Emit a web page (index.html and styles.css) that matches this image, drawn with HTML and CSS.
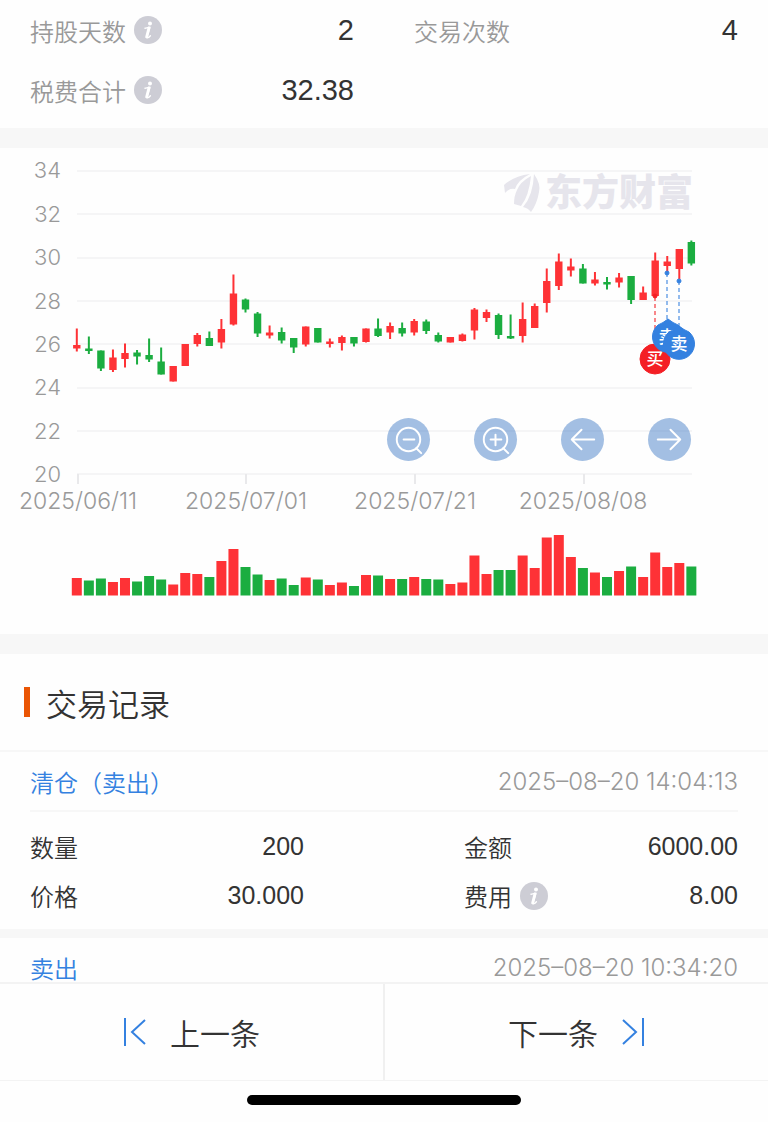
FILE: index.html
```html
<!DOCTYPE html>
<html lang="zh-CN">
	<head>
		<meta charset="UTF-8">
		<meta name="viewport" content="width=device-width, initial-scale=1.0">
		<title>交易记录</title>
		<link rel="stylesheet" href="styles.css">
	</head>
	<body>
		<svg class="defs" width="0" height="0" aria-hidden="true">
			<symbol id="info" viewBox="0 0 28 28">
				<circle cx="14" cy="14" r="14" fill="#cdcdd5"/>
				<circle cx="16" cy="7.4" r="2" fill="#fff"/>
				<path d="M11 12.2C12.6 11.9 14 11.5 16 11.2L13.2 21C13 22.2 14.4 22 16.4 19.8" fill="none" stroke="#fff" stroke-width="1.4" stroke-linecap="round" stroke-linejoin="round"/>
				<path d="M14.9 12L12.6 21" stroke="#fff" stroke-width="2.8" stroke-linecap="round"/>
			</symbol>
		</svg>
		<main>
			<section class="stats">
				<div class="item">
					<span class="label">持股天数</span>
					<button class="info" type="button" aria-label="持股天数说明"><svg><use href="#info"/></svg></button>
					<span class="value">2</span>
				</div>
				<div class="item">
					<span class="label">交易次数</span>
					<span class="value">4</span>
				</div>
				<div class="item">
					<span class="label">税费合计</span>
					<button class="info" type="button" aria-label="税费合计说明"><svg><use href="#info"/></svg></button>
					<span class="value">32.38</span>
				</div>
			</section>

			<section class="chart">
				<svg class="kline" viewBox="0 148 768 486">
					<g class="grid">
						<path d="M77 171H692M77 214H692M77 258H692M77 301H692M77 344H692M77 388H692M77 431H692M77 474H692"/>
						<path class="tick" d="M78 474V484M246 474V484M415 474V484M584 474V484"/>
					</g>
					<g class="logo">
						<path d="M504 185Q514 176 530 174Q518 180 515 189Q509 188 505 193Z"/>
						<path d="M531 176Q520 182 517 190Q514 196 514 204L521 206Q529 196 531 176Z"/>
						<path d="M534 174Q541 184 539 192Q537 204 531 212Q528 208 523 207Q533 196 534 174Z"/>
						<text x="619" y="206">东方财富</text>
					</g>
					<g class="y-axis">
						<text x="61" y="178">34</text>
						<text x="61" y="222">32</text>
						<text x="61" y="265">30</text>
						<text x="61" y="309">28</text>
						<text x="61" y="352">26</text>
						<text x="61" y="395">24</text>
						<text x="61" y="439">22</text>
						<text x="61" y="482">20</text>
					</g>
					<g class="x-axis">
						<text x="78" y="509">2025/06/11</text>
						<text x="246" y="509">2025/07/01</text>
						<text x="415" y="509">2025/07/21</text>
						<text x="583" y="509">2025/08/08</text>
					</g>
					<g id="bars"></g>
					<g class="marks">
						<path class="line buy" d="M655 297V344"/>
						<path class="line sell" d="M667 273V320M679 281V328"/>
						<circle class="buy" cx="655" cy="296" r="2"/>
						<circle class="sell" cx="667" cy="273" r="2"/>
						<circle class="sell" cx="679" cy="281" r="2"/>
						<circle class="buy" cx="655" cy="359" r="15"/>
						<text x="655" y="365">买</text>
						<path class="sell" d="M668 319Q673 323 678 325A15.5 15.5 0 1 1 658 325Q663 323 668 319Z"/>
						<text x="667" y="343">卖</text>
						<path class="sell" d="M679 326Q684 330 689 332A15.5 15.5 0 1 1 669 332Q674 330 679 326Z"/>
						<text x="679" y="350">卖</text>
					</g>
				</svg>
				<div class="tools">
					<button type="button" aria-label="缩小">
						<svg viewBox="0 0 44 44"><circle cx="22" cy="22" r="12"/><path d="M17 22H28M30 31L35 36"/></svg>
					</button>
					<button type="button" aria-label="放大">
						<svg viewBox="0 0 44 44"><circle cx="22" cy="22" r="12"/><path d="M17 22H28M22 17V28M30 31L35 36"/></svg>
					</button>
					<button type="button" aria-label="左移">
						<svg viewBox="0 0 44 44"><path d="M34 22H11M21 12L11 22L21 32"/></svg>
					</button>
					<button type="button" aria-label="右移">
						<svg viewBox="0 0 44 44"><path d="M10 22H33M23 12L33 22L23 32"/></svg>
					</button>
				</div>
			</section>

			<section class="records">
				<h2>交易记录</h2>
				<article>
					<header>
						<a href="#">清仓（卖出）</a>
						<time>2025–08–20 14:04:13</time>
					</header>
					<div class="detail">
						<div class="item">
							<span>数量</span>
							<span class="value">200</span>
						</div>
						<div class="item">
							<span>金额</span>
							<span class="value">6000.00</span>
						</div>
						<div class="item">
							<span>价格</span>
							<span class="value">30.000</span>
						</div>
						<div class="item">
							<span>费用</span>
							<button class="info" type="button" aria-label="费用说明"><svg><use href="#info"/></svg></button>
							<span class="value">8.00</span>
						</div>
					</div>
				</article>
				<article>
					<header>
						<a href="#">卖出</a>
						<time>2025–08–20 10:34:20</time>
					</header>
				</article>
			</section>
		</main>

		<footer>
			<nav>
				<button type="button">
					<svg viewBox="0 0 24 28"><path d="M2 0V28M22 2L9 14L22 26"/></svg>
					上一条
				</button>
				<button type="button">
					下一条
					<svg viewBox="0 0 24 28"><path d="M22 0V28M2 2L15 14L2 26"/></svg>
				</button>
			</nav>
			<div class="home"></div>
		</footer>
		<script src="chart.js"></script>
	</body>
</html>
```
FILE: styles.css
```css
*{
	box-sizing: border-box;
}
body{
	margin: 0;
	height: 100vh;
	display: flex;
	flex-direction: column;
	background-color: #fefefe;
	color: #333;
	font-family: Inter, "Noto Sans CJK SC", sans-serif;
	font-size: 24px;
	font-weight: 350;
}
.defs{
	position: absolute;
}
button{
	appearance: none;
	border: none;
	padding: 0;
	background: none;
	color: inherit;
	font: inherit;
	cursor: pointer;
}
main{
	flex: 1;
	min-height: 0;
	overflow-y: auto;
	scrollbar-width: none;
}
.item{
	display: flex;
	align-items: center;
	gap: 8px;
}
.value{
	margin-left: auto;
	font-family: "Liberation Sans", sans-serif;
}
.info, .info svg{
	display: block;
	width: 28px;
	height: 28px;
}
.stats{
	display: grid;
	grid-template-columns: 1fr 1fr;
	grid-auto-rows: 60px;
	column-gap: 60px;
	padding: 0 30px 8px;
}
.stats .label{
	color: #999;
}
.stats .value{
	font-size: 29px;
}
.chart{
	position: relative;
	border-top: 20px solid #f7f7f7;
	border-bottom: 20px solid #f7f7f7;
}
.kline{
	display: block;
	width: 100%;
}
.grid path{
	stroke: #f5f5f6;
	stroke-width: 2;
}
.grid .tick{
	stroke: #e9e9eb;
}
.logo{
	fill: #e6e5ec;
}
.logo text{
	font-size: 37px;
	font-weight: 900;
	text-anchor: middle;
}
.y-axis, .x-axis{
	fill: #999;
	font-size: 22px;
}
.y-axis{
	text-anchor: end;
}
.x-axis{
	font-size: 23px;
	text-anchor: middle;
}
.up{
	fill: #fe3236;
}
.down{
	fill: #1bad40;
}
.buy{
	fill: #f41f25;
	stroke: #f41f25;
}
.sell{
	fill: #3481e0;
	stroke: #3481e0;
}
.line{
	stroke-width: 1.5;
	stroke-dasharray: 4 3;
	opacity: 0.7;
}
.marks text{
	fill: #fff;
	font-size: 17px;
	font-weight: 500;
	text-anchor: middle;
}
.tools{
	position: absolute;
	right: 10%;
	bottom: 35.5%;
	display: flex;
	gap: 44px;
}
.tools button{
	width: 43px;
	height: 43px;
	border-radius: 50%;
	background-color: rgba(72, 128, 200, 0.5);
}
.tools svg{
	display: block;
	fill: none;
	stroke: #fff;
	stroke-width: 2;
	stroke-linecap: round;
	stroke-linejoin: round;
}
h2{
	display: flex;
	align-items: center;
	gap: 16px;
	height: 98px;
	margin: 0;
	padding-left: 24px;
	border-bottom: 2px solid #f7f7f7;
	font-size: 31px;
	font-weight: 350;
}
h2::before{
	content: "";
	width: 6px;
	height: 30px;
	background-color: #ea5504;
}
article{
	padding: 0 30px;
	border-bottom: 9px solid #f7f7f7;
}
article header{
	display: flex;
	align-items: center;
	justify-content: space-between;
	height: 60px;
	border-bottom: 2px solid #f7f7f7;
}
article a{
	color: #3481e0;
	text-decoration: none;
}
time{
	color: #999;
}
.detail{
	display: grid;
	grid-template-columns: 1fr 1fr;
	grid-auto-rows: 49px;
	column-gap: 160px;
	padding: 10px 0 9px;
}
.detail .value{
	font-size: 25px;
}
footer{
	border-top: 2px solid #f3f3f3;
	background-color: #fefefe;
}
nav{
	display: flex;
	height: 97px;
	border-bottom: 1px solid #f3f3f3;
}
nav button{
	flex: 1;
	display: flex;
	align-items: center;
	justify-content: center;
	gap: 23px;
	font-size: 30px;
}
nav button + button{
	border-left: 2px solid #f0f0f0;
}
nav svg{
	width: 24px;
	height: 28px;
	fill: none;
	stroke: #3481e0;
	stroke-width: 2;
}
.home{
	width: 274px;
	height: 10px;
	margin: 14px auto 17px;
	border-radius: 5px;
	background-color: #000;
}
```
FILE: chart.js
```js
// [high, open/close top, open/close bottom, low, volume, up]
const bars = [
	[328.5, 345, 348.5, 351.5, 17.5, 1],
	[336.5, 348.5, 351, 354, 15, 0],
	[350.5, 350.5, 368.5, 371, 17, 0],
	[349.5, 357.5, 370, 372, 13.5, 1],
	[343.5, 353, 359, 367.5, 17.5, 1],
	[350, 352.5, 356.5, 364.5, 14, 0],
	[338.5, 355, 359.5, 362, 19.5, 0],
	[347.5, 361.5, 374.5, 374.5, 16, 0],
	[366, 366, 381.5, 381.5, 11, 1],
	[344, 344, 366, 366, 22.5, 1],
	[333, 335, 344, 346.5, 21.5, 1],
	[331.5, 338, 346, 346, 18.5, 0],
	[319, 329, 342.5, 348.5, 34.5, 1],
	[274.5, 293.5, 324.5, 325.5, 46.5, 1],
	[298.5, 299.5, 309.5, 312.5, 28.5, 0],
	[312, 313.5, 333.5, 337, 21, 0],
	[325.5, 332.5, 335.5, 338.5, 15.5, 1],
	[327.5, 332, 340.5, 343.5, 17, 0],
	[338, 338, 347.5, 353, 10.5, 0],
	[326.5, 326.5, 344.5, 346.5, 18, 1],
	[328, 328, 342.5, 342.5, 16, 0],
	[338.5, 341.5, 344, 347.5, 10.5, 1],
	[335.5, 337, 343, 350.5, 13, 1],
	[337, 337, 343.5, 346.5, 9.5, 0],
	[328.5, 328.5, 342, 342.5, 20.5, 1],
	[318.5, 328.5, 336, 337, 20, 0],
	[322.5, 326, 332.5, 339, 16.5, 1],
	[322.5, 328, 333.5, 336.5, 16.5, 0],
	[319, 321, 332.5, 335.5, 18.5, 1],
	[319.5, 321.5, 331, 334, 16.5, 0],
	[332.5, 335, 341.5, 342.5, 16, 0],
	[337, 337, 342.5, 342.5, 11.5, 1],
	[333.5, 334.5, 341, 341.5, 13, 1],
	[308, 309.5, 330.5, 339.5, 40, 1],
	[309.5, 312, 318, 322, 21.5, 1],
	[313.5, 315, 335, 339, 25.5, 0],
	[314.5, 336, 338.5, 339, 25.5, 0],
	[302.5, 319, 336, 342.5, 40, 1],
	[303.5, 306, 328, 328, 27.5, 1],
	[268.5, 281, 303, 312.5, 58, 1],
	[253.5, 261.5, 286, 290, 60.5, 1],
	[258.5, 266.5, 270.5, 276.5, 38.5, 1],
	[264, 268.5, 283.5, 283.5, 27.5, 0],
	[272, 279.5, 283.5, 285.5, 23, 1],
	[277, 282, 284.5, 289.5, 18.5, 0],
	[273, 277.5, 282.5, 287.5, 24.5, 1],
	[276, 276, 300, 304, 29, 0],
	[286.5, 292.5, 300, 300, 18.5, 1],
	[252.5, 260.5, 296, 297, 43, 1],
	[256, 261.5, 266, 272, 28.5, 1],
	[249, 249, 269, 279, 32.5, 1],
	[240.5, 242, 263.5, 265.5, 29, 0]
];
const step = 12.05;
const base = 595.5;

function rect(x, y, width, height, type) {
	const el = document.createElementNS('http://www.w3.org/2000/svg', 'rect');
	el.setAttribute('x', x);
	el.setAttribute('y', y);
	el.setAttribute('width', width);
	el.setAttribute('height', height);
	el.setAttribute('class', type);
	document.getElementById('bars').appendChild(el);
}

bars.forEach(([high, top, bottom, low, volume, up], i) => {
	const x = 76.8 + i * step;
	const type = up ? 'up' : 'down';
	rect(x - 1, high, 2, low - high, type);
	rect(x - 3.7, top, 7.4, bottom - top, type);
	rect(x - 5, base - volume, 10, volume, type);
});
```
